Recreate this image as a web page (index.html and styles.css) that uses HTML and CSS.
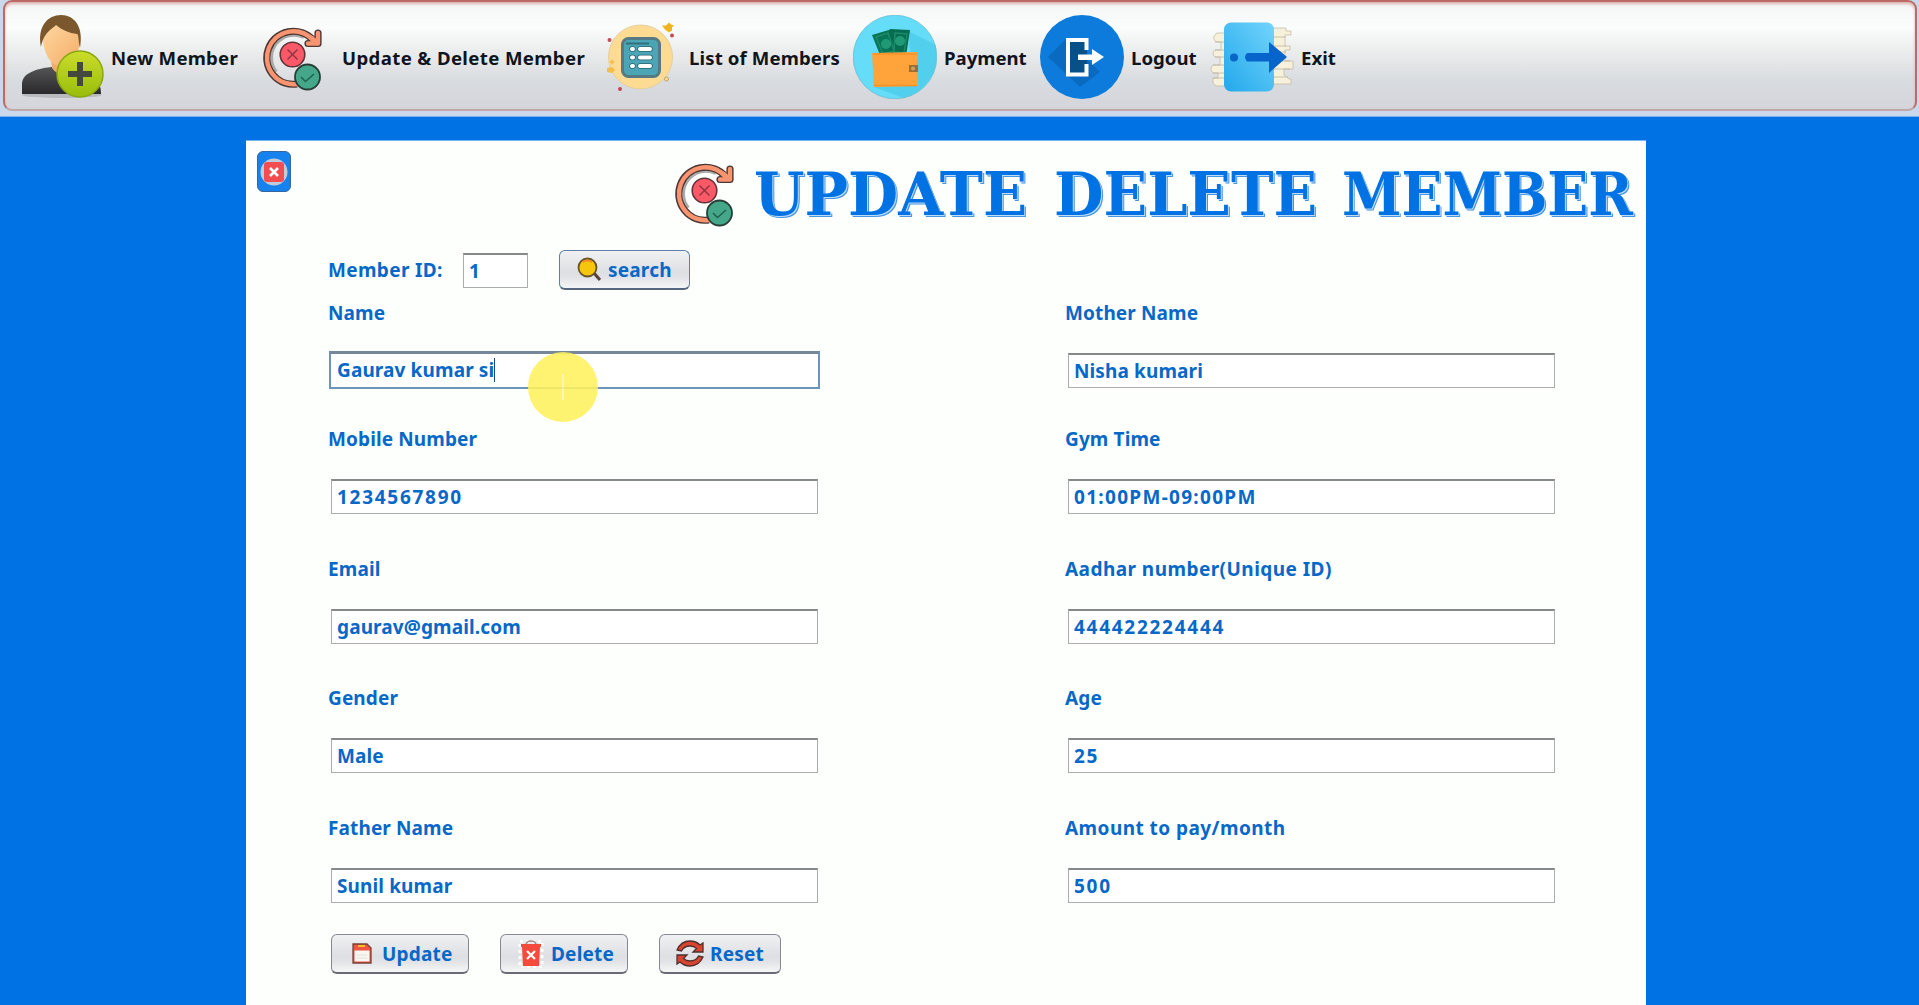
FILE: index.html
```html
<!DOCTYPE html>
<html lang="en">
<head>
<meta charset="utf-8">
<title>Update Delete Member</title>
<link rel="stylesheet" href="styles.css">
</head>
<body>
<svg class="defs" aria-hidden="true">
  <symbol id="update-icon" viewBox="0 0 60 64">
    <path d="M13 45A23 23 0 0 1 41 10" fill="none" stroke="#aaa" stroke-width="4"/>
    <path d="M34 57A26.500 26.500 0 1 1 50 13" fill="none" stroke="#4c3734" stroke-width="7.200"/>
    <path d="M55 6V16.500H45" fill="none" stroke="#4c3734" stroke-width="7.200" stroke-linecap="round" stroke-linejoin="round"/>
    <path d="M34 57A26.500 26.500 0 1 1 51 14" fill="none" stroke="#f8946f" stroke-width="4.400"/>
    <path d="M55 6V16.500H45M49 11L54 16" fill="none" stroke="#f8946f" stroke-width="4.400" stroke-linecap="round" stroke-linejoin="round"/>
    <circle cx="29.500" cy="27.500" r="12.300" fill="#fb5967" stroke="#61343a" stroke-width="1.600"/>
    <path d="M24.500 22.500l10 10m0-10l-10 10" stroke="#89343e" stroke-width="1.400"/>
    <circle cx="44.500" cy="50" r="12.500" fill="#45a789" stroke="#293c36" stroke-width="1.800"/>
    <path d="M38 50l4.500 4.500 8.500-7.500" fill="none" stroke="#21624f" stroke-width="1.600"/>
  </symbol>
</svg>

<div class="toolbar-strip">
<nav class="toolbar">
  <a class="tool tool-new">
    <svg class="tool-icon" viewBox="0 0 84 84">
      <defs>
        <linearGradient id="suit" x2="0" y2="1"><stop stop-color="#555457"/><stop offset="1" stop-color="#29282b"/></linearGradient>
        <linearGradient id="skin" x2="1" y2="1"><stop stop-color="#ffd9a4"/><stop offset="1" stop-color="#f4ac66"/></linearGradient>
        <linearGradient id="plus" x2="0" y2="1"><stop stop-color="#cbdc2c"/><stop offset="1" stop-color="#99bd0b"/></linearGradient>
      </defs>
      <ellipse cx="42" cy="80" rx="40" ry="3" fill="#b9babd"/>
      <path d="M2 79V69C2 58 16 54 31 52H50C68 55 81 62 81 79Z" fill="url(#suit)"/>
      <path d="M31 44H49V55Q40 64 32 53Z" fill="#f0ad69"/>
      <path d="M22 18Q24 6 41 6T60 22C60 40 52 51 41 51S23 38 22 18Z" fill="url(#skin)"/>
      <path d="M21 32C17 11 28 0 41 0S64 11 60 33C58 25 59 20 57 19C49 18 42 15 36 10C31 15 24 17 21 32Z" fill="#7a572c"/>
      <circle cx="60" cy="59" r="23" fill="url(#plus)" stroke="#8aa711" stroke-width="1.500"/>
      <path d="M60 47V71M48 59H72" stroke="#44483d" stroke-width="6"/>
    </svg>
    <span class="tool-label">New Member</span>
  </a>
  <a class="tool tool-update">
    <span class="tool-icon tool-icon-small"><svg class="update-icon"><use href="#update-icon"/></svg></span>
    <span class="tool-label">Update &amp; Delete Member</span>
  </a>
  <a class="tool tool-list">
    <svg class="tool-icon" viewBox="0 0 84 84">
      <circle cx="42.500" cy="42" r="32" fill="#fedb93" stroke="#e5cf9f"/>
      <rect x="24.500" y="23.500" width="37" height="38" rx="6" fill="#4ba5b5" stroke="#557a83" stroke-width="3"/>
      <path d="M28 28.500H51" stroke="#326f7b" stroke-width="2"/>
      <g stroke="#286471" stroke-width="5.500" stroke-linecap="round"><path d="M34 34h1M42 34h10M34 42.500h1M42 42.500h10M34 51h1M42 51h10"/></g>
      <g stroke="#fff" stroke-width="4" stroke-linecap="round"><path d="M34 34h1M42 34h10M34 42.500h1M42 42.500h10M34 51h1M42 51h10"/></g>
      <path d="M64 10.500h4l3-3 2 2 3 1-2 2 0 3-3 2-4-3z" fill="#efb51f"/>
      <path d="M9 53l5-1 3 3-3 3-5-1zM14 44l1 2 2 1-2 1-1 2-1-2-2-1 2-1z" fill="#f4bd49"/>
      <g fill="#c54a54"><circle cx="11.500" cy="25" r="2"/><circle cx="74" cy="20.500" r="2"/><circle cx="22" cy="74" r="2"/></g>
      <circle cx="68.500" cy="64" r="2" fill="#f8dc9d" stroke="#c5a263"/>
    </svg>
    <span class="tool-label">List of Members</span>
  </a>
  <a class="tool tool-payment">
    <svg class="tool-icon" viewBox="0 0 84 84">
      <circle cx="42" cy="42" r="41.800" fill="#65dcf8" stroke="#58b9cf" stroke-width=".7"/>
      <path d="M55 16L83 30V49Q77 74 51 83L21 72 60 60Z" fill="#43c5e2" opacity=".55"/>
      <path d="M19 20L39 14 47 38 27 40Z" fill="#087656"/><path d="M37 14L57 15 53 41 36 39Z" fill="#066d50"/>
      <g fill="none" stroke="#1c8a68" stroke-width="1.500"><path d="M23 22l12-4 6 18-11 3zM42 18l12 1-3 19-10-1z"/></g>
      <g fill="#1f9a74"><circle cx="33" cy="29" r="5"/><circle cx="47" cy="26" r="5"/></g>
      <path d="M19 38L64 37 65 71 21 72Z" fill="#ffa33a"/>
      <path d="M20 39H64M21 70.500H64" stroke="#f79227" stroke-width="1.500"/>
      <rect x="56" y="50" width="9" height="7" fill="#9b6d38"/><circle cx="60" cy="53.500" r="2" fill="#caa266"/>
    </svg>
    <span class="tool-label">Payment</span>
  </a>
  <a class="tool tool-logout">
    <svg class="tool-icon" viewBox="0 0 84 84">
      <circle cx="42" cy="42" r="42" fill="#0c7bdc"/>
      <path d="M26 24L8 42L40 72L60 57Z" fill="#0864b5" opacity=".75"/>
      <path d="M28 25H47V60H28Z" fill="#075188"/>
      <path d="M46.500 35V25H28V59.500H46.500V49" fill="none" stroke="#fff" stroke-width="4"/>
      <path d="M38 39.500H52V34L64 42 52 50V45H38Z" fill="#fff"/>
    </svg>
    <span class="tool-label">Logout</span>
  </a>
  <a class="tool tool-exit">
    <svg class="tool-icon" viewBox="0 0 84 84">
      <defs><linearGradient id="door" x1="1" y1="0" x2="0" y2="1"><stop stop-color="#72d4fc"/><stop offset="1" stop-color="#22a8eb"/></linearGradient></defs>
      <g fill="#f7f0da" stroke="#bcb6a2" stroke-width=".7">
        <path d="M16 18H7Q1 22 6 27H11V35H5Q1 38 5 42H10V50H3Q-1 54 3 58H8V63H3Q2 70 7 71H18Z"/>
        <path d="M61 13H76V16H81V20H75V31H80V35H75V46H83V54H74V60L79 64H81V69H61Z"/>
      </g>
      <path d="M5 27H16M5 35H16M5 42H16M3 50H16M3 58H16M3 63H16M62 22H76M62 31H76M62 37H76M62 46H80M62 54H80M62 62H78" stroke="#bcb6a2" stroke-width=".8"/>
      <rect x="14" y="7.500" width="50" height="69" rx="7" fill="url(#door)"/>
      <circle cx="24" cy="42.500" r="4" fill="#0766c7"/>
      <path d="M37 38H59V27L77 42 59 58V46.500H37Q33 42 37 38Z" fill="#0764ca"/>
    </svg>
    <span class="tool-label">Exit</span>
  </a>
</nav>
</div>

<main class="panel">
  <header class="panel-head">
    <button class="close" aria-label="Close">
      <svg width="28" height="28" viewBox="0 0 28 28"><circle cx="14" cy="14" r="13.500" fill="#c2cbd9"/><rect x="4" y="4" width="20" height="20" rx="3" fill="#f24d50"/><path d="M10 10l8 8m0-8l-8 8" stroke="#fff" stroke-width="2.600"/></svg>
    </button>
    <svg class="update-icon title-icon"><use href="#update-icon"/></svg>
    <h1 class="title">
      <svg class="title-art" viewBox="0 0 886 70">
        <text y="54" x="1" textLength="273" lengthAdjust="spacingAndGlyphs">UPDATE</text>
        <text y="54" x="301" textLength="263" lengthAdjust="spacingAndGlyphs">DELETE</text>
        <text y="54" x="589" textLength="291" lengthAdjust="spacingAndGlyphs">MEMBER</text>
      </svg>
    </h1>
  </header>

  <form class="form">
    <div class="lookup">
      <label class="label lookup-label">Member ID:</label>
      <div class="field field-id">1</div>
      <button type="button" class="btn btn-search">
        <svg width="24" height="25" viewBox="0 0 24 25"><path d="M16 15l7 8" stroke="#58433a" stroke-width="3"/><circle cx="10.500" cy="10.500" r="9" fill="#f6c60e" stroke="#66532b" stroke-width="1.800"/><path d="M6 5Q10 2 15 5" fill="none" stroke="#f58922" stroke-width="2"/></svg>
        <span>search</span>
      </button>
    </div>

    <div class="fields">
      <div class="group"><label class="label">Name</label><div class="field focused"><span class="caret">Gaurav kumar si</span></div></div>
      <div class="group"><label class="label">Mother Name</label><div class="field">Nisha kumari</div></div>
      <div class="group"><label class="label">Mobile Number</label><div class="field numeric">1234567890</div></div>
      <div class="group"><label class="label">Gym Time</label><div class="field time">01:00PM-09:00PM</div></div>
      <div class="group"><label class="label">Email</label><div class="field">gaurav@gmail.com</div></div>
      <div class="group"><label class="label wide">Aadhar number(Unique ID)</label><div class="field numeric">444422224444</div></div>
      <div class="group"><label class="label">Gender</label><div class="field">Male</div></div>
      <div class="group"><label class="label">Age</label><div class="field numeric">25</div></div>
      <div class="group"><label class="label">Father Name</label><div class="field">Sunil kumar</div></div>
      <div class="group"><label class="label wide">Amount to pay/month</label><div class="field numeric">500</div></div>
    </div>

    <div class="actions">
      <button type="button" class="btn btn-update">
        <svg width="20" height="21" viewBox="0 0 20 21"><path d="M1 1H15L19 5V20H1Z" fill="#ef5543" stroke="#7b4038" stroke-width="1.300"/><path d="M6 2H13V4H6Z" fill="#f5c51d"/><path d="M2.500 7.500H17.500V18.500H2.500Z" fill="#f7f6f1"/><path d="M5 12H15M5 15H15" stroke="#e4e2d8"/></svg>
        <span>Update</span>
      </button>
      <button type="button" class="btn btn-delete">
        <svg width="26" height="28" viewBox="0 0 26 28"><rect x="2" y="1" width="22" height="26" fill="none" stroke="#fff" stroke-width="3" stroke-dasharray="3 3"/><path d="M8 4Q9 1 13 1T18 4" fill="none" stroke="#a78a8c" stroke-width="1.500"/><path d="M3 4H23V7H22L21 26H5L4 7H3Z" fill="#f44b3c"/><path d="M9 11l8 8m0-8l-8 8" stroke="#fff" stroke-width="2.200"/></svg>
        <span>Delete</span>
      </button>
      <button type="button" class="btn btn-reset">
        <svg width="28" height="27" viewBox="0 0 28 27"><g id="half" fill="#d8442f" stroke="#4d302d" stroke-width="1.300"><path d="M1 10Q5 1 14 1Q20 1 24 5L27 3V12H17L20.500 8.500Q18 6 14 6Q8 6 5.500 11Z"/></g><use href="#half" transform="rotate(180 14 13.500)"/></svg>
        <span>Reset</span>
      </button>
    </div>
  </form>
</main>
<div class="pointer"></div>
</body>
</html>
```
FILE: styles.css
```css
* { box-sizing: border-box; }

body {
  margin: 0;
  height: 1005px;
  overflow: hidden;
  display: flex;
  flex-direction: column;
  background: #0072e3;
  font-family: "Noto Sans", "Open Sans", sans-serif;
  font-weight: 700;
}

.defs { position: absolute; width: 0; height: 0; }

.toolbar-strip {
  flex: none;
  height: 117px;
  padding: 0 2px 0 3px;
  background: #c9d9ec;
  border-bottom: 1px solid #79b1ea;
}

.toolbar {
  display: flex;
  height: 111px;
  padding: 13px 0 0 15px;
  border: 2px solid #bc6a65;
  border-bottom-color: #bea8a8;
  border-radius: 9px;
  background: linear-gradient(#f4f6f6, #fbfdfc 24%, #eceded 45%, #d8dbdf 75%, #d5d5db);
  box-shadow: inset 0 2px 3px #dcb1ac;
}

.tool { display: flex; align-items: center; height: 84px; gap: 8px; }
.tool-new { width: 231px; letter-spacing: .25px; }
.tool-update { width: 347px; letter-spacing: .38px; }
.tool-list { width: 255px; letter-spacing: .12px; }
.tool-payment { width: 187px; }
.tool-logout { width: 170px; }
.tool-icon { flex: none; width: 84px; height: 84px; }
.tool-icon-small { padding: 12px 0 0 12px; }
.tool-label { margin-left: -1px; padding-top: 2px; color: #10141c; font-size: 18.6px; line-height: 24px; white-space: nowrap; }
.update-icon { flex: none; display: block; width: 60px; height: 64px; }

.panel {
  flex: none;
  width: 1400px;
  height: 865px;
  margin: 23px 0 0 246px;
  background: #fdfffd;
  border-top: 1px solid #70b4f2;
}

.panel-head { display: flex; height: 109px; padding: 10px 0 0 11px; }

.close {
  width: 34px;
  height: 41px;
  padding: 0;
  display: grid;
  place-items: center;
  border: 1px solid #34679f;
  border-radius: 6px;
  background: #1682ed;
}

.title-icon { margin: 12px 0 0 384px; }
.title { margin: 10px 0 0 18px; height: 70px; }
.title-art { display: block; width: 886px; height: 70px; overflow: visible; }
.title-art text {
  font-family: Algerian, "DejaVu Serif", serif;
  font-size: 60px;
  font-weight: 700;
  fill: #0072e3;
  text-shadow: 1px 1px 0 #bcdcf9, 2px 2px 0 #4794df;
}

.form { padding-left: 82px; color: #0868c8; letter-spacing: .12px; }

.lookup { display: flex; align-items: center; height: 40px; margin-bottom: 11px; }
.lookup-label { width: 135px; letter-spacing: .35px; }
.label { display: block; font-size: 19px; line-height: 24px; white-space: nowrap; }
.wide { letter-spacing: .45px; }

.field {
  height: 35px;
  margin-left: 3px;
  width: 487px;
  padding: 0 0 0 5px;
  border: 1px solid #a9adac;
  border-top: 2px solid #858989;
  background: #fff;
  font-size: 19px;
  line-height: 32px;
}
.field-id { width: 65px; margin: 0 31px 0 0; }
.numeric { letter-spacing: 1.72px; }
.time { letter-spacing: 1.3px; }
.focused { width: 491px; height: 38px; margin: -2px 0 -1px 1px; padding-left: 6px; border: 2px solid #6d94b9; border-top: 3px solid #76869b; line-height: 33px; }
.caret { display: inline-block; line-height: 24px; border-right: 1px solid #164c86; }

.fields {
  display: grid;
  grid-template-columns: 737px 490px;
  grid-template-rows: 126px 130px 129px 130px 87px;
}
.group { display: flex; flex-direction: column; gap: 28px; }

.btn {
  display: flex;
  align-items: center;
  height: 40px;
  padding: 0 0 0 19px;
  border: 1px solid #858a90;
  border-bottom: 2px solid #686c72;
  border-radius: 6px;
  background: linear-gradient(#f0f1f2, #dedfe3 58%, #e1e3e6 72%, #f5f6f7);
  color: #0868c8;
  font: inherit;
  font-size: 19px;
  line-height: 24px;
  letter-spacing: .2px;
}
.btn-search { width: 131px; gap: 7px; padding-left: 17px; border-color: #5d7fa8; border-bottom-color: #57677f; }
.btn-update { width: 138px; gap: 10px; padding-left: 20px; }
.btn-delete { width: 128px; gap: 7px; padding-left: 17px; }
.btn-reset { width: 122px; gap: 6px; padding-left: 16px; }

.actions { display: flex; gap: 31px; margin: 31px 0 0 3px; }

.pointer {
  position: absolute;
  left: 528px;
  top: 352px;
  width: 70px;
  height: 70px;
  border-radius: 50%;
  background: linear-gradient(#fff7a4, #fff7a4) center / 2px 26px no-repeat, #fff25e;
  opacity: .88;
}
```
